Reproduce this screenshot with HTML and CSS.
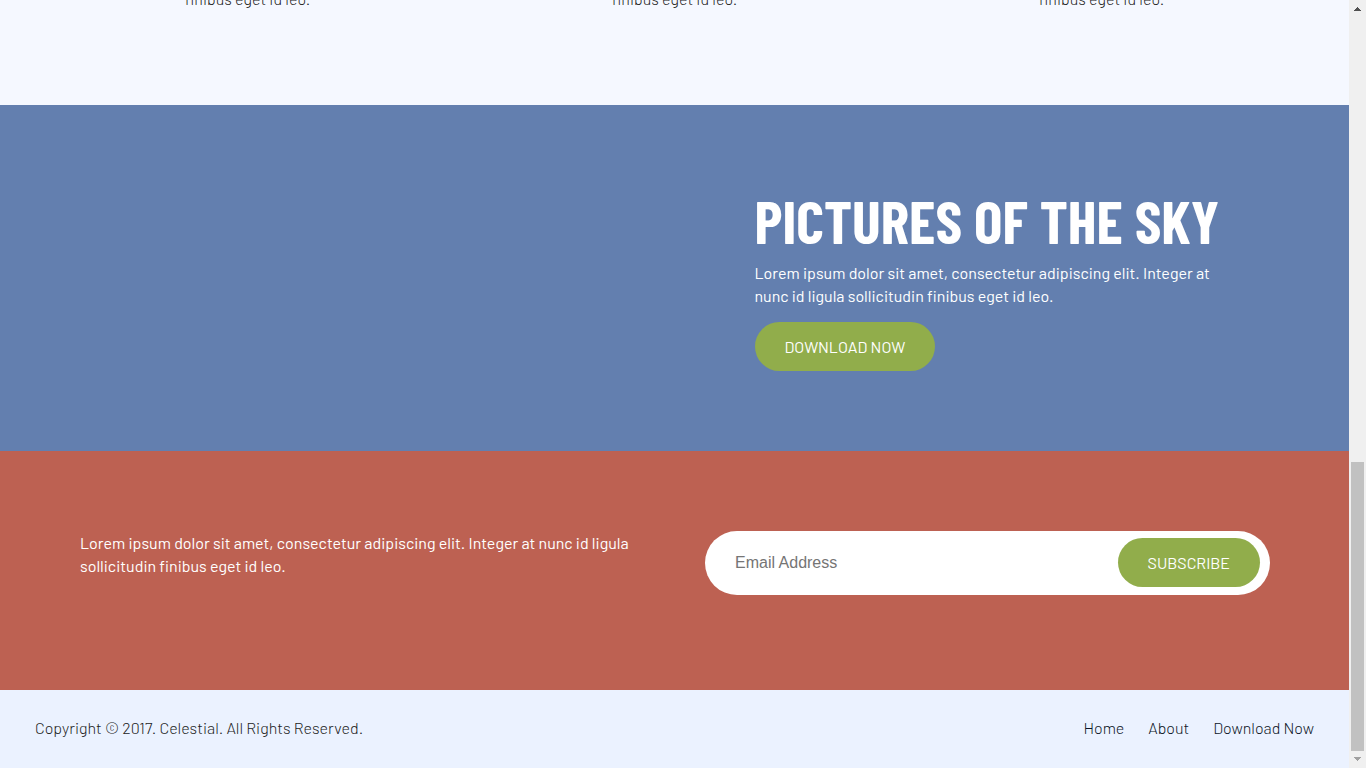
FILE: index.html
```html
<!DOCTYPE html>
<html lang="en">
<head>
<meta charset="utf-8">
<title>Celestial</title>
<link rel="stylesheet" href="styles.css">
</head>
<body>
<div class="page">
  <section class="features">
    <p>finibus eget id leo.</p>
    <p>finibus eget id leo.</p>
    <p>finibus eget id leo.</p>
  </section>
  <section class="sky">
    <div class="sky-content">
      <h2>Pictures of the sky</h2>
      <p>Lorem ipsum dolor sit amet, consectetur adipiscing elit. Integer at nunc id ligula sollicitudin finibus eget id leo.</p>
      <a class="button" href="#download">Download Now</a>
    </div>
  </section>
  <section class="subscribe">
    <p>Lorem ipsum dolor sit amet, consectetur adipiscing elit. Integer at nunc id ligula sollicitudin finibus eget id leo.</p>
    <form class="subscribe-form">
      <input type="email" placeholder="Email Address" aria-label="Email Address">
      <button class="button" type="submit">Subscribe</button>
    </form>
  </section>
  <footer class="footer">
    <p>Copyright © 2017. Celestial. All Rights Reserved.</p>
    <nav class="footer-nav">
      <a href="#home">Home</a>
      <a href="#about">About</a>
      <a href="#download">Download Now</a>
    </nav>
  </footer>
</div>
<div class="scrollbar" aria-hidden="true">
  <svg class="arrow arrow-up" viewBox="0 0 7 4" shape-rendering="crispEdges"><path d="M3 0h1v1h1v1h1v1h1v1H0V3h1V2h1V1h1z"/></svg>
  <div class="track"><div class="thumb"></div></div>
  <svg class="arrow arrow-down" viewBox="0 0 7 4" shape-rendering="crispEdges"><path d="M0 0h7v1H6v1H5v1H4v1H3V3H2V2H1V1H0z"/></svg>
</div>
</body>
</html>
```
FILE: styles.css
```css
* {
  box-sizing: border-box;
}

body {
  display: flex;
  height: 100vh;
  margin: 0;
  overflow: hidden;
  background: #f5f8ff;
  color: #222;
  font-family: Barlow, Roboto, sans-serif;
  font-size: 16px;
  line-height: 23px;
}

h2,
p {
  margin: 0;
}

a {
  color: inherit;
  text-decoration: none;
}

.page {
  display: flex;
  flex: 1;
  flex-direction: column;
  justify-content: flex-end;
  min-width: 0;
}

.features {
  display: grid;
  grid-template-columns: repeat(3, 1fr);
  padding: 0 34px 95px;
  font-weight: 300;
  text-align: center;
}

.sky {
  display: grid;
  grid-template-columns: 1fr 1fr;
  background: #637faf;
  color: #fff;
}

.sky-content {
  grid-column: 2;
  padding: 80px 120px 80px 80px;
}

.sky h2 {
  margin-bottom: 6px;
  font-family: "Barlow Condensed", "Roboto Condensed", "Liberation Sans Narrow", Roboto, sans-serif;
  font-size: 60px;
  font-weight: 700;
  line-height: 70px;
  text-transform: uppercase;
  white-space: nowrap;
}

.sky p {
  margin-bottom: 15px;
}

.button {
  display: inline-block;
  padding: 13px 30px;
  border: 0;
  border-radius: 25px;
  background: #91ad4b;
  color: #fff;
  font: inherit;
  text-transform: uppercase;
  vertical-align: top;
}

.subscribe {
  display: grid;
  grid-template-columns: 1fr 1fr;
  gap: 60px;
  align-items: start;
  padding: 80px 79px 95px 80px;
  background: #bd6152;
  color: #fff;
}

.subscribe-form {
  display: flex;
  align-items: center;
  padding: 7px 10px 8px 30px;
  border-radius: 32px;
  background: #fff;
}

.subscribe-form input {
  flex: 1;
  min-width: 0;
  padding: 0;
  border: 0;
  outline: 0;
  font-family: "Liberation Sans", Arial, sans-serif;
  font-size: 16px;
}

.footer {
  display: flex;
  justify-content: space-between;
  padding: 26px 35px 29px;
  background: #ebf2ff;
  font-weight: 300;
}

.footer-nav {
  display: flex;
  gap: 24px;
  color: #0b1526;
}

.scrollbar {
  display: flex;
  flex-direction: column;
  align-items: center;
  width: 17px;
  padding: 7px 2px;
  background: #f0f0f0;
}

.arrow {
  width: 7px;
  height: 4px;
}

.arrow-up {
  fill: #505050;
}

.arrow-down {
  fill: #a0a0a0;
}

.track {
  display: flex;
  flex: 1;
  flex-direction: column;
  justify-content: flex-end;
  width: 100%;
  padding: 6px 0;
}

.thumb {
  height: 289px;
  background: #c1c1c1;
}
```
